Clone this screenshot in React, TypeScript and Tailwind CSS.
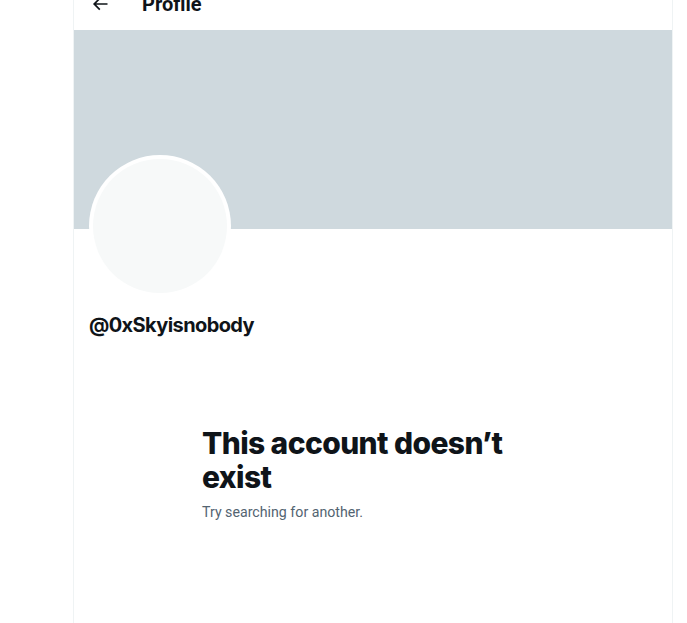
import React from "react";

export default function App() {
  return (
    <div
      className="w-[687px] h-[623px] overflow-hidden bg-white"
      style={{ fontFamily: "Roboto, 'Liberation Sans', sans-serif" }}
    >
      <div className="ml-[73px] w-[600px] h-[623px] border-x border-[#eff3f4] flex flex-col">
        <div className="mt-[-23px] h-[53px] flex items-center pl-[16px] shrink-0">
          <div className="w-[52px] flex items-center">
            <svg viewBox="0 0 24 24" className="w-5 h-5 fill-[#0f1419]">
              <path d="M7.414 13l5.043 5.04-1.414 1.42L3.586 12l7.457-7.46 1.414 1.42L7.414 11H21v2H7.414z" />
            </svg>
          </div>
          <div className="text-[20px] font-bold text-[#0f1419] leading-6">Profile</div>
        </div>
        <div className="h-[199px] bg-[#cfd9de] shrink-0" />
        <div className="pl-[15px] flex flex-col">
          <div className="mt-[-74px] w-[142px] h-[142px] rounded-full bg-white p-[4px]">
            <div className="w-full h-full rounded-full bg-[#f7f9f9]" />
          </div>
          <div
            className="mt-[16px] text-[20px] font-bold text-[#0f1419] leading-6 tracking-[-0.6px]"
            style={{ fontFamily: "Inter, 'Liberation Sans', sans-serif" }}
          >
            @0xSkyisnobody
          </div>
        </div>
        <div className="mt-[89px] ml-[128px] w-[336px]">
          <div
            className="text-[30px] font-extrabold text-[#0f1419] leading-[34px] tracking-[-0.6px]"
            style={{ fontFamily: "Inter, 'Liberation Sans', sans-serif" }}
          >
            This account doesn’t exist
          </div>
          <div className="mt-[8px] text-[14.2px] text-[#536471] leading-5">
            Try searching for another.
          </div>
        </div>
      </div>
    </div>
  );
}
